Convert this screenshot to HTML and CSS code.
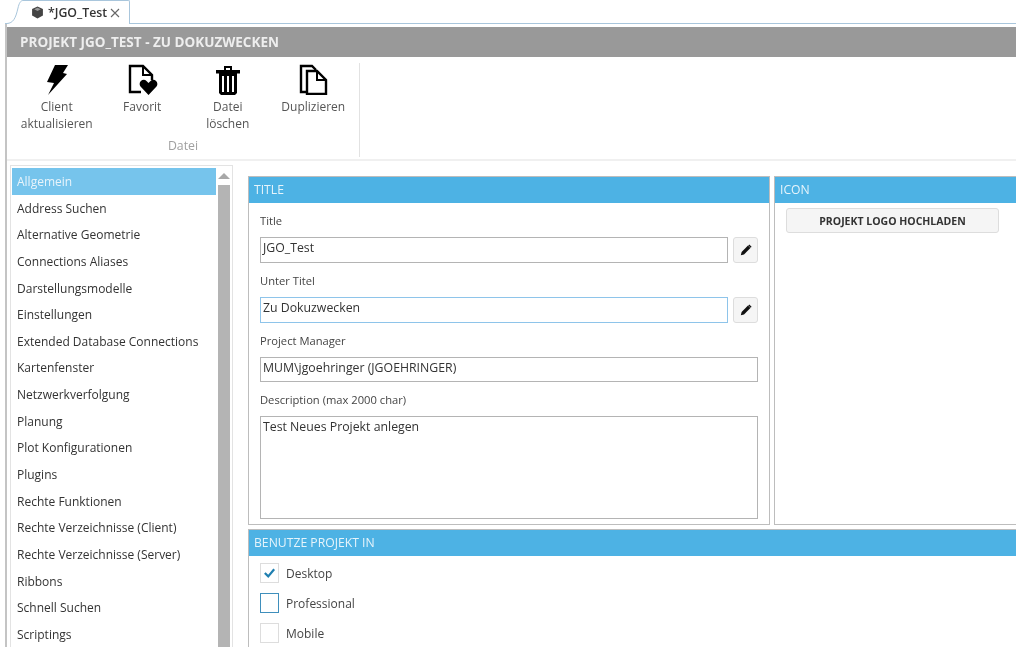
FILE: index.html
```html
<!DOCTYPE html>
<html lang="de">
<head>
    <meta charset="UTF-8">
    <title>JGO_Test</title>
    <link rel="stylesheet" href="styles.css">
</head>
<body>
    <div class="tabstrip">
        <svg class="tab-curve" viewBox="0 0 18 24"><path d="M0 23.500h2C8 23 10.500 19 13 8 14 3.500 15.500 .5 18 .5V24H0z" fill="#fff"/><path d="M0 23.500h2C8 23 10.500 19 13 8 14 3.500 15.500 .5 18 .5" fill="none" stroke="#a9c6dc"/></svg>
        <div class="tab">
            <svg class="tab-icon" viewBox="0 0 12 12"><path d="M6 .5 11 2.800v6L6 11.500 1 8.800v-6z" fill="#444"/><path d="M6 1.500 9 3 6 4.600 3 3z" fill="#999"/></svg>
            <span class="tab-name">*JGO_Test</span>
            <svg class="tab-close" viewBox="0 0 10 10"><path d="M1 1l8 8M9 1 1 9" stroke="#666" stroke-width="1.100" fill="none"/></svg>
        </div>
    </div>

    <div class="window">
        <div class="titlebar">PROJEKT JGO_TEST - ZU DOKUZWECKEN</div>

        <div class="ribbon">
            <div class="ribbon-group">
                <div class="ribbon-items">
                    <div class="ribbon-item">
                        <svg class="ribbon-icon" viewBox="0 0 32 32"><path d="M14 2h13l-5 8 4 1L7 32l6-12-7-1z" fill="#000"/></svg>
                        <span>Client<br>aktualisieren</span>
                    </div>
                    <div class="ribbon-item">
                        <svg class="ribbon-icon" viewBox="0 0 32 32"><path d="M15 29H4V3h13l9 9v5" fill="none" stroke="#000" stroke-width="2.400"/><path d="M17 3v9h9" fill="none" stroke="#000" stroke-width="2"/><path d="M22.500 32l-8-8.500c-3-4 2.500-9 6-5.500l2 2 2-2c3.500-3.500 9 1.500 6 5.500z" fill="#000"/></svg>
                        <span>Favorit</span>
                    </div>
                    <div class="ribbon-item">
                        <svg class="ribbon-icon" viewBox="0 0 32 32"><path d="M4 7h8V3h8v4h8v3.500H4zM7 10.500h18V30l-2 2H9l-2-2z" fill="#000"/><path d="M14 5h4v2h-4z" fill="#fff"/><path d="M11 13v16M16 13v16M21 13v16" stroke="#fff" stroke-width="2"/></svg>
                        <span>Datei<br>löschen</span>
                    </div>
                    <div class="ribbon-item">
                        <svg class="ribbon-icon" viewBox="0 0 32 32"><path d="M9 29H4V3h11l4 4" fill="none" stroke="#000" stroke-width="2.400"/><path d="M10 8h10l9 9v14H10z" fill="#fff" stroke="#000" stroke-width="2.400"/><path d="M20 8v9h9" fill="none" stroke="#000" stroke-width="2"/></svg>
                        <span>Duplizieren</span>
                    </div>
                </div>
                <div class="ribbon-group-name">Datei</div>
            </div>
        </div>

        <div class="content">
            <div class="sidebar">
                <ul class="nav">
                    <li class="nav-item active">Allgemein</li>
                    <li class="nav-item">Address Suchen</li>
                    <li class="nav-item">Alternative Geometrie</li>
                    <li class="nav-item">Connections Aliases</li>
                    <li class="nav-item">Darstellungsmodelle</li>
                    <li class="nav-item">Einstellungen</li>
                    <li class="nav-item">Extended Database Connections</li>
                    <li class="nav-item">Kartenfenster</li>
                    <li class="nav-item">Netzwerkverfolgung</li>
                    <li class="nav-item">Planung</li>
                    <li class="nav-item">Plot Konfigurationen</li>
                    <li class="nav-item">Plugins</li>
                    <li class="nav-item">Rechte Funktionen</li>
                    <li class="nav-item">Rechte Verzeichnisse (Client)</li>
                    <li class="nav-item">Rechte Verzeichnisse (Server)</li>
                    <li class="nav-item">Ribbons</li>
                    <li class="nav-item">Schnell Suchen</li>
                    <li class="nav-item">Scriptings</li>
                </ul>
                <div class="scrollbar">
                    <div class="scroll-arrow"></div>
                    <div class="scroll-thumb"></div>
                </div>
            </div>

            <div class="main">
                <div class="panel-row">
                    <section class="panel panel-title">
                        <h2 class="panel-head">TITLE</h2>
                        <div class="panel-body">
                            <label class="field-label">Title</label>
                            <div class="field-row">
                                <div class="input">JGO_Test</div>
                                <div class="pen-btn"><svg viewBox="0 0 12 12"><path d="M.8 11.200l.8-3.200L8 1.600 10.400 4 4 10.400z" fill="#111"/><path d="M8.800 .9l2.300 2.300" stroke="#111" stroke-width="1.400"/></svg></div>
                            </div>
                            <label class="field-label">Unter Titel</label>
                            <div class="field-row">
                                <div class="input input-focus">Zu Dokuzwecken</div>
                                <div class="pen-btn"><svg viewBox="0 0 12 12"><path d="M.8 11.200l.8-3.200L8 1.600 10.400 4 4 10.400z" fill="#111"/><path d="M8.800 .9l2.300 2.300" stroke="#111" stroke-width="1.400"/></svg></div>
                            </div>
                            <label class="field-label">Project Manager</label>
                            <div class="field-row field-row-short">
                                <div class="input">MUM\jgoehringer (JGOEHRINGER)</div>
                            </div>
                            <label class="field-label">Description (max 2000 char)</label>
                            <div class="input textarea">Test Neues Projekt anlegen</div>
                        </div>
                    </section>
                    <section class="panel panel-icon">
                        <h2 class="panel-head">ICON</h2>
                        <div class="panel-body icon-body">
                            <div class="upload-btn">PROJEKT LOGO HOCHLADEN</div>
                        </div>
                    </section>
                </div>
                <section class="panel panel-use">
                    <h2 class="panel-head">BENUTZE PROJEKT IN</h2>
                    <div class="panel-body use-body">
                        <div class="check-row">
                            <span class="check"><svg viewBox="0 0 20 20"><path d="M4.500 10l4 4 7-8.500" fill="none" stroke="#1f7fb0" stroke-width="2.600"/></svg></span>
                            <span class="check-label">Desktop</span>
                        </div>
                        <div class="check-row">
                            <span class="check check-hover"></span>
                            <span class="check-label">Professional</span>
                        </div>
                        <div class="check-row">
                            <span class="check"></span>
                            <span class="check-label">Mobile</span>
                        </div>
                    </div>
                </section>
            </div>
        </div>
    </div>
</body>
</html>
```

FILE: styles.css
```css
* {
    margin: 0;
    padding: 0;
    box-sizing: border-box;
}

html, body {
    height: 647px;
    overflow: hidden;
    background: #fff;
}

body {
    font-family: 'Open Sans', 'Noto Sans', sans-serif;
    font-size: 12px;
    color: #333;
    padding-right: 8px;
    filter: blur(0.35px);
}

.tabstrip {
    height: 23px;
    padding-left: 5px;
    display: flex;
}

.tab-curve {
    width: 18px;
    height: 24px;
    flex: none;
    position: relative;
    z-index: 1;
}

.tab {
    width: 107px;
    height: 24px;
    display: flex;
    align-items: center;
    padding-left: 8px;
    gap: 3px;
    background: #fff;
    border: 1px solid #a9c6dc;
    border-left: none;
    border-bottom: none;
    border-radius: 0 2px 0 0;
    position: relative;
    z-index: 1;
}

.tab-icon {
    width: 13px;
    height: 13px;
    margin-right: 1px;
}

.tab-name {
    font-weight: 600;
    font-size: 12.300px;
    color: #333;
}

.tab-close {
    width: 10px;
    height: 10px;
}

.window {
    height: 624px;
    margin-left: 5px;
    border-top: 1px solid #a9c6dc;
    border-left: 2px solid #c4c4c4;
    padding-top: 3px;
    display: flex;
    flex-direction: column;
}

.titlebar {
    height: 30px;
    background: #999;
    color: #eee;
    font-weight: 700;
    font-size: 13.500px;
    line-height: 31px;
    padding-left: 13px;
    flex: none;
}

.ribbon {
    height: 104px;
    flex: none;
    border-bottom: 2px solid #f0f0f0;
    display: flex;
    padding-top: 6px;
}

.ribbon-group {
    width: 353px;
    height: 94px;
    border-right: 1px solid #e2e2e2;
}

.ribbon-items {
    display: flex;
    height: 74px;
    padding-left: 7px;
}

.ribbon-item {
    width: 85.500px;
    flex: none;
    display: flex;
    flex-direction: column;
    align-items: center;
    text-align: center;
    font-size: 12px;
    line-height: 17px;
    color: #555;
}

.ribbon-icon {
    width: 32px;
    height: 32px;
    margin-bottom: 3px;
    flex: none;
}

.ribbon-group-name {
    text-align: center;
    color: #a0a0a0;
    font-size: 12.300px;
    line-height: 18px;
}

.content {
    flex: 1;
    display: flex;
    min-height: 0;
    padding-top: 4px;
}

.sidebar {
    width: 223px;
    margin-left: 3px;
    border: 1px solid #e3e3e3;
    border-bottom: none;
    display: flex;
    padding: 2px 1px 0 1px;
    flex: none;
}

.nav {
    list-style: none;
    width: 204px;
    flex: none;
}

.nav-item {
    height: 26.650px;
    line-height: 27.300px;
    padding-left: 5px;
    white-space: nowrap;
}

.nav-item.active {
    background: #76c4ec;
    color: #e8f4fb;
}

.scrollbar {
    flex: 1;
    margin-left: 1px;
    display: flex;
    flex-direction: column;
    align-items: center;
}

.scroll-arrow {
    width: 0;
    height: 0;
    margin: 5px 0 6px;
    border-left: 6px solid transparent;
    border-right: 6px solid transparent;
    border-bottom: 6px solid #a8a8a8;
}

.scroll-thumb {
    width: 12px;
    flex: 1;
    background: #b4b4b4;
}

.main {
    flex: 1;
    padding: 11px 0 0 15px;
    display: flex;
    flex-direction: column;
    gap: 4px;
    min-width: 0;
}

.panel-row {
    display: flex;
    gap: 4px;
    height: 349px;
    flex: none;
}

.panel {
    border: 1px solid #bdbdbd;
    display: flex;
    flex-direction: column;
}

.panel-title {
    width: 522px;
    flex: none;
}

.panel-icon {
    flex: 1;
    border-right: none;
}

.panel-use {
    flex: 1;
    border-right: none;
    border-bottom: none;
}

.panel-head {
    height: 26px;
    flex: none;
    background: #4db2e4;
    color: #e6f4fb;
    font-size: 12.200px;
    font-weight: 400;
    line-height: 26px;
    padding-left: 5px;
}

.panel-body {
    flex: 1;
    padding: 0 11px;
}

.field-label {
    display: block;
    height: 34px;
    line-height: 36px;
    color: #444;
    font-size: 11.200px;
}

.field-row {
    display: flex;
    gap: 5px;
    height: 26px;
}

.field-row-short {
    height: 25px;
}

.input {
    flex: 1;
    border: 1px solid #b4b4b4;
    background: #fff;
    font-size: 12.300px;
    line-height: 20px;
    padding-left: 2px;
    color: #333;
}

.input-focus {
    border-color: #8ec4ea;
}

.textarea {
    height: 103px;
    flex: none;
}

.pen-btn {
    width: 25px;
    flex: none;
    border: 1px solid #ddd;
    border-radius: 3px;
    background: #f5f5f5;
    display: flex;
    align-items: center;
    justify-content: center;
}

.pen-btn svg {
    width: 12px;
    height: 12px;
}

.icon-body {
    padding: 5px 0 0 11px;
}

.upload-btn {
    width: 213px;
    height: 25px;
    border: 1px solid #ddd;
    border-radius: 3px;
    background: #f5f5f5;
    text-align: center;
    font-size: 10.500px;
    font-weight: 700;
    line-height: 24px;
    color: #333;
}

.use-body {
    padding-top: 7px;
    display: flex;
    flex-direction: column;
    gap: 10px;
}

.check-row {
    display: flex;
    align-items: center;
    gap: 7px;
    height: 20px;
    flex: none;
    color: #444;
}

.check-label {
    padding-top: 1px;
}

.check {
    width: 19px;
    height: 20px;
    border: 1px solid #ddd;
    flex: none;
}

.check svg {
    display: block;
    width: 17px;
    height: 18px;
}

.check-hover {
    border-color: #3f8fbc;
}
```
